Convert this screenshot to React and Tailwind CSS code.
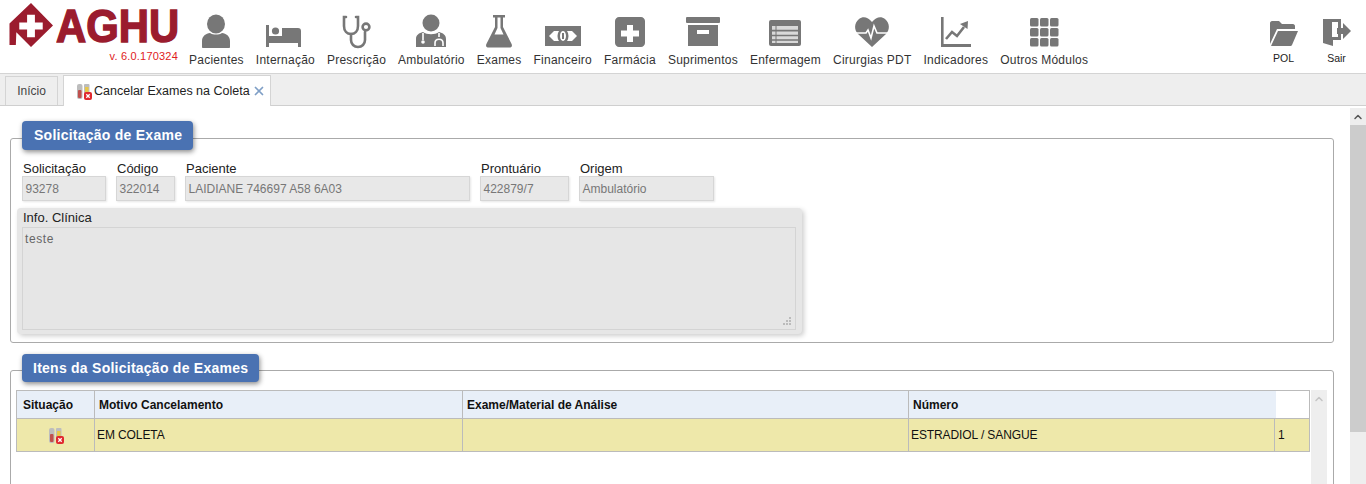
import React from 'react';
import { X, ChevronUp } from 'lucide-react';

const gray = '#777777';

// all nav icons share a 40x36 box, coordinates are drawn inside that box
const icons = {
  pacientes: (
    <>
      <ellipse cx="20" cy="10" rx="9" ry="9.5" fill={gray} />
      <path d="M6 33v-6c0-5 4-7.5 8-8 3 2 9 2 12 0 4 .5 8 3 8 8v6c0 .6-.5 1-1 1H7c-.5 0-1-.4-1-1z" fill={gray} />
    </>
  ),
  internacao: (
    <>
      <path d="M1 11h3v14h32v-8c0-2-1-3-3-3H17v8H4v3h32v8h-3v-4H4v4H1z" fill={gray} />
      <circle cx="10.5" cy="17" r="3.6" fill={gray} />
    </>
  ),
  prescricao: (
    <g fill="none" stroke={gray} strokeWidth="2.6" strokeLinecap="round">
      <path d="M9 3H7v9c0 5 3 8 7 8s7-3 7-8V3h-2" />
      <path d="M14 20v6c0 4 3 7 7 7s7-3 7-7v-8" />
      <circle cx="29" cy="13" r="3.4" />
    </g>
  ),
  ambulatorio: (
    <>
      <circle cx="20" cy="9" r="8.5" fill={gray} />
      <path d="M5 33v-8c0-4 3-6 7-7 4 3 12 3 16 0 4 1 7 3 7 7v8z" fill={gray} />
      <path d="M12 19v7M28 19v4M24 32v-3c0-5 8-5 8 0v3" stroke="#fff" strokeWidth="1.6" fill="none" />
      <circle cx="12" cy="28" r="1.8" fill="#fff" />
    </>
  ),
  exames: (
    <path fillRule="evenodd" d="M14 1h12v2.4h-2V13l8.6 17c1 2.2-.3 3.6-2.2 3.6H9.6c-2 0-3.2-1.4-2.2-3.6L16 13V3.4h-2zM18.5 3.4V14l-3 6.5h9l-3-6.5V3.4z" fill={gray} />
  ),
  financeiro: (
    <>
      <rect x="2" y="12" width="36" height="20" fill={gray} />
      <path d="M6 22l5-5h18l5 5-5 5H11z" fill="#fff" />
      <ellipse cx="20" cy="22" rx="5.5" ry="7.5" fill={gray} />
      <ellipse cx="20" cy="22" rx="3" ry="5" fill="#fff" />
      <rect x="19" y="19" width="2" height="6" fill={gray} />
    </>
  ),
  farmacia: (
    <path fillRule="evenodd" d="M9 3h22c2 0 4 2 4 4v22c0 2-2 4-4 4H9c-2 0-4-2-4-4V7c0-2 2-4 4-4zm8 8v5.500h-6v6h6V28h6v-5.500h6v-6h-6V11z" fill={gray} />
  ),
  suprimentos: (
    <>
      <rect x="3" y="3" width="34" height="6" rx="1" fill={gray} />
      <path fillRule="evenodd" d="M5 11h30v21H5zm9 5v4h12v-4z" fill={gray} />
    </>
  ),
  enfermagem: (
    <>
      <rect x="4" y="6" width="32" height="26" rx="2" fill={gray} />
      <rect x="7" y="12" width="26" height="17" fill="#d9d9d9" />
      <path d="M7 16.600h26M7 21.500h26M7 26h26" stroke={gray} strokeWidth="1.700" />
      <path d="M11 12v17" stroke={gray} strokeWidth="1" />
    </>
  ),
  cirurgias: (
    <>
      <path d="M20 33L6 20C2 16 2 9 7 5c4-3 9-2 13 3 4-5 9-6 13-3 5 4 5 11 1 15z" fill={gray} />
      <path d="M3 19h11l2-3 3 8 3-12 3 7h12" fill="none" stroke="#fff" strokeWidth="1.600" />
    </>
  ),
  indicadores: (
    <>
      <path d="M5 3h2.600v27H35v3H5z" fill={gray} />
      <path d="M10 25l6-7 5 4 7-9" fill="none" stroke={gray} strokeWidth="2.600" />
      <path d="M24 10l8-3-.5 8z" fill={gray} />
    </>
  ),
  outros: (
    <g fill={gray}>
      {[6, 16, 26].map((x) =>
        [4, 14, 24].map((y) => <rect key={`${x}-${y}`} x={x} y={y} width="8.500" height="8.500" rx="1.500" />)
      )}
    </g>
  ),
};

const modules = [
  { label: 'Pacientes', icon: 'pacientes' },
  { label: 'Internação', icon: 'internacao' },
  { label: 'Prescrição', icon: 'prescricao' },
  { label: 'Ambulatório', icon: 'ambulatorio' },
  { label: 'Exames', icon: 'exames' },
  { label: 'Financeiro', icon: 'financeiro' },
  { label: 'Farmácia', icon: 'farmacia' },
  { label: 'Suprimentos', icon: 'suprimentos' },
  { label: 'Enfermagem', icon: 'enfermagem' },
  { label: 'Cirurgias PDT', icon: 'cirurgias' },
  { label: 'Indicadores', icon: 'indicadores' },
  { label: 'Outros Módulos', icon: 'outros' },
];

const fields = [
  { label: 'Solicitação', value: '93278', width: 'w-[84px]' },
  { label: 'Código', value: '322014', width: 'w-[59px]' },
  { label: 'Paciente', value: 'LAIDIANE 746697 A58 6A03', width: 'w-[285px]' },
  { label: 'Prontuário', value: '422879/7', width: 'w-[89px]' },
  { label: 'Origem', value: 'Ambulatório', width: 'w-[135px]' },
];

const NavItem = ({ label, icon }) => (
  <div className="flex flex-col items-center">
    <svg width="40" height="36" viewBox="0 0 40 36" className="mt-[14px] mb-[3px]">
      {icons[icon]}
    </svg>
    <span className="text-[12px] leading-[14px] whitespace-nowrap text-[#333] tracking-[0.24px]">{label}</span>
  </div>
);

const TubesIcon = () => (
  <svg width="17" height="17" viewBox="0 0 17 17">
    <rect x="1" y="1" width="5.500" height="15" rx="2" fill="#bdbdbd" />
    <rect x="2" y="7" width="3.500" height="8" rx="1" fill="#c0504d" />
    <rect x="8" y="1" width="5.500" height="10" rx="1" fill="#bdbdbd" />
    <rect x="9" y="4" width="3.500" height="5" fill="#e8c84a" />
    <rect x="8" y="9" width="8" height="8" rx="2" fill="#e0282e" />
    <path d="M10.300 11.300l3.400 3.400M13.700 11.300l-3.400 3.400" stroke="#fff" strokeWidth="1.300" />
  </svg>
);

const Legend = ({ children, className }) => (
  <div className={`w-fit flex items-center rounded bg-[#4a72b2] text-white font-bold text-[14px] tracking-[0.25px] shadow-[1px_2px_5px_rgba(0,0,0,0.45)] ${className}`}>
    {children}
  </div>
);

const Field = ({ label, value, width }) => (
  <div className={width}>
    <div className="pl-px text-[13px] leading-[14px] pt-px -mb-px text-[#222]">{label}</div>
    <div className="mt-px h-[25px] flex items-center px-[2.500px] bg-[#e8e8e8] border border-[#d6d6d6] text-[12px] text-[#777] shadow-[1px_1px_2px_rgba(0,0,0,0.1)]">
      {value}
    </div>
  </div>
);

const HeaderCell = ({ children, className }) => (
  <div className={`flex items-center text-[12px] font-bold text-[#111] border-r border-[#bbb] bg-[#e8eff8] ${className}`}>{children}</div>
);

const BodyCell = ({ children, className }) => (
  <div className={`flex items-center text-[12px] tracking-[-0.1px] text-[#111] border-r border-[#bbb] ${className}`}>{children}</div>
);

export default function App() {
  return (
    <div className="w-[1366px] h-[484px] overflow-hidden bg-white font-['Liberation_Sans',Arial,sans-serif] flex flex-col">
      {/* Top menu */}
      <header className="h-[74px] flex-none flex border-b border-[#d4d4d4]">
        <div className="w-[183px] flex-none pl-2 pt-[3px]">
          <div className="flex items-center h-[46px]">
            <svg width="46" height="44" viewBox="0 0 46 45" className="mb-[2px] flex-none">
              <path fillRule="evenodd" d="M23 0l22.500 23L23 45 8 30l-.5 13H1V21zM19 12v8h-8v7h8v8h8v-8h8v-7h-8v-8z" fill="#9b1c2e" />
            </svg>
            <span className="ml-[2px] inline-block origin-left scale-x-[0.89] text-[47px] leading-[46px] font-bold text-[#9b1c2e] [-webkit-text-stroke:1.500px_#9b1c2e]">AGHU</span>
          </div>
          <div className="text-[11px] leading-[13px] text-[#e01b22] text-right pr-[5px] mt-[1px] tracking-[0.2px]">v. 6.0.170324</div>
        </div>
        <nav className="flex gap-3 ml-[6px]">
          {modules.map((m) => (
            <NavItem key={m.label} {...m} />
          ))}
        </nav>
        <div className="ml-auto flex pr-[3px]">
          <div className="w-[53px] flex flex-col items-center">
            <svg width="30" height="28" viewBox="0 0 30 28" className="mt-[20px] mb-[4px]">
              <path d="M1 3c0-1 1-2 2-2h7l3 3h11c1 0 2 1 2 2v3H8L1 24z" fill={gray} />
              <path d="M9 11h20l-6 14c-.3.700-1 1-2 1H2z" fill={gray} />
            </svg>
            <span className="text-[10.500px] leading-[12px] text-[#222]">POL</span>
          </div>
          <div className="w-[53px] flex flex-col items-center">
            <svg width="30" height="30" viewBox="0 0 30 30" className="mt-[18px] mb-[4px]">
              <path d="M1 1h18v9h-3V4h-6v6H10v9h6v-5h3v8h-8v6L1 25z" fill={gray} />
              <path d="M15 10h6V5l8 8-8 8v-5h-6z" fill={gray} />
            </svg>
            <span className="text-[10.500px] leading-[12px] text-[#222]">Sair</span>
          </div>
        </div>
      </header>

      {/* Tabs */}
      <div className="h-[32px] flex-none flex items-end gap-[5px] pl-[5px] bg-[#eeeeee] border-b border-[#cfcfcf]">
        <div className="h-[29px] w-[53px] flex items-center justify-center border border-b-0 border-[#d4d4d4] text-[12px] text-[#444]">Início</div>
        <div className="h-[31px] w-[208px] -mb-px flex items-center pl-3 bg-white border border-b-0 border-[#d4d4d4] text-[12.500px] text-[#222]">
          <TubesIcon />
          <span className="whitespace-nowrap ml-px">Cancelar Exames na Coleta</span>
          <X size={14} strokeWidth={3} className="ml-[2px] text-[#7f9fc6]" />
        </div>
      </div>

      {/* Content */}
      <main className="flex-1 min-h-0 flex overflow-hidden">
        <div className="flex-1 min-w-0 pt-8 pl-[10px] pr-4">
          <section className="border border-[#aaa] rounded-[3px] px-[11px] pb-2">
            <Legend className="h-[29px] -mt-[18px] pl-3 pr-[11px]">Solicitação de Exame</Legend>
            <div className="flex gap-[10px] mt-[11px]">
              {fields.map((f) => (
                <Field key={f.label} {...f} />
              ))}
            </div>
            <div className="mt-[7px] -ml-[5px] w-[785px] h-[126px] pl-[5px] pr-[6px] pt-[3px] rounded-sm bg-[#e6e6e6] shadow-[2px_2px_5px_rgba(0,0,0,0.2)]">
              <div className="text-[13px] leading-[14px] pl-px text-[#222]">Info. Clínica</div>
              <div className="relative mt-[2px] h-[103px] px-[2px] py-[4px] border border-[#d4d4d4] text-[12px] leading-[14px] text-[#666] tracking-[0.6px]">
                teste
                <svg width="9" height="9" viewBox="0 0 9 9" className="absolute right-[3px] bottom-[3px]">
                  <path d="M6 0h2v2H6zM3 3h2v2H3zM6 3h2v2H6zM0 6h2v2H0zM3 6h2v2H3zM6 6h2v2H6z" fill="#bbb" />
                </svg>
              </div>
            </div>
          </section>

          <section className="mt-[27px] h-[200px] border border-[#aaa] rounded-[3px] pl-[5px]">
            <Legend className="h-[28px] -mt-[17px] ml-[6px] px-[11px]">Itens da Solicitação de Exames</Legend>
            <div className="mt-2 flex gap-px">
              <div className="w-[1294px] h-[62px] flex-none border-t border-l border-b border-[#bbb]">
                <div className="h-[28px] flex border-b border-[#bbb]">
                  <HeaderCell className="w-[78px] pl-[6px]">Situação</HeaderCell>
                  <HeaderCell className="w-[368px] pl-1">Motivo Cancelamento</HeaderCell>
                  <HeaderCell className="w-[446px] pl-1">Exame/Material de Análise</HeaderCell>
                  <div className="w-[367px] pl-1 flex items-center text-[12px] font-bold text-[#111] bg-[#e8eff8]">Número</div>
                  <div className="flex-1 border-r border-[#bbb]" />
                </div>
                <div className="h-[32px] flex bg-[#eee8aa]">
                  <BodyCell className="w-[78px] justify-center pl-[2px]">
                    <TubesIcon />
                  </BodyCell>
                  <BodyCell className="w-[368px] pl-[2px]">EM COLETA</BodyCell>
                  <BodyCell className="w-[446px]" />
                  <BodyCell className="w-[366px] pl-[2px]">ESTRADIOL / SANGUE</BodyCell>
                  <BodyCell className="flex-1 pl-[3px]">1</BodyCell>
                </div>
              </div>
              <div className="w-4 h-[100px] flex-none flex justify-center bg-[#eeeeee] pt-[3px]">
                <ChevronUp size={12} strokeWidth={3} className="text-[#c4c4c4]" />
              </div>
            </div>
          </section>
        </div>

        {/* Page scrollbar */}
        <div className="w-4 flex-none flex flex-col mt-[2px] bg-[#eeeeee]">
          <div className="h-[17px] flex items-center justify-center">
            <ChevronUp size={12} strokeWidth={3} className="text-[#555]" />
          </div>
          <div className="h-[307px] bg-[#cccccc]" />
        </div>
      </main>
    </div>
  );
}
